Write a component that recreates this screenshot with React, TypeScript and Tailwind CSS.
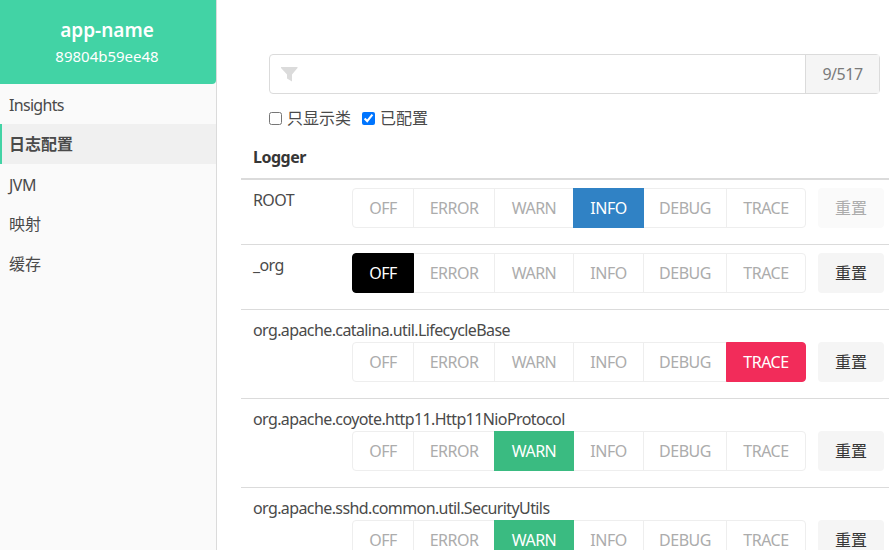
import React from "react";

const levels = ["OFF", "ERROR", "WARN", "INFO", "DEBUG", "TRACE"];
const widths = ["w-[62px]", "w-[82px]", "w-[80px]", "w-[71px]", "w-[84px]", "w-[80px]"];
const activeCls: Record<string, string> = {
  OFF: "bg-black text-white border-black",
  WARN: "bg-[#3abb81] text-white border-[#3abb81]",
  INFO: "bg-[#3082c5] text-white border-[#3082c5]",
  TRACE: "bg-[#f22c5a] text-white border-[#f22c5a]",
};

const rows = [
  { name: "ROOT", level: "INFO", disabled: true },
  { name: "_org", level: "OFF" },
  { name: "org.apache.catalina.util.LifecycleBase", level: "TRACE" },
  { name: "org.apache.coyote.http11.Http11NioProtocol", level: "WARN" },
  { name: "org.apache.sshd.common.util.SecurityUtils", level: "WARN" },
];

function Row({ name, level, disabled }: { name: string; level: string; disabled?: boolean }) {
  return (
    <div className="flex flex-wrap items-start justify-between border-b border-[#dbdbdb] pt-2 pb-4 pl-3 pr-[5px]">
      <div className="leading-6 tracking-[-0.6px]">{name}</div>
      <div className="ml-auto flex h-10 shrink-0">
        <div className="flex h-10">
          {levels.map((l, i) => {
            const on = l === level;
            return (
              <div
                key={l}
                className={`flex h-10 items-center justify-center border ${widths[i]} ${i > 0 ? "-ml-px" : ""} ${
                  i === 0 ? "rounded-l" : ""
                } ${i === 5 ? "rounded-r" : ""} ${on ? `${activeCls[l]} relative` : "border-[#eeeeee] text-[#acacac]"}`}
              >
                {l}
              </div>
            );
          })}
        </div>
        <div
          className={`ml-3 flex h-10 w-[66px] items-center justify-center rounded tracking-normal ${
            disabled ? "bg-[#fafafa] text-[#acacac]" : "bg-[#f5f5f5] text-[#363636]"
          }`}
        >
          重置
        </div>
      </div>
    </div>
  );
}

export default function App() {
  return (
    <div
      className="flex h-[550px] w-[889px] overflow-hidden bg-white text-[16px] tracking-[-0.5px] text-[#4a4a4a]"
      style={{ fontFamily: '"Noto Sans","Noto Sans CJK SC",sans-serif' }}
    >
      <aside className="h-full w-[217px] shrink-0 border-r border-[#dbdbdb] bg-[#fafafa]">
        <div className="flex h-[84px] flex-col items-center justify-center rounded-br-sm bg-[#42d3a5] pr-[2px] tracking-normal text-white">
          <div className="text-[19px] font-semibold leading-[28px]">app-name</div>
          <div className="text-[15px] leading-[24px]">89804b59ee48</div>
        </div>
        <nav>
          <div className="flex h-10 items-center pl-[9px] pt-px tracking-[-0.7px]">Insights</div>
          <div className="flex h-10 items-center border-l-2 border-[#42d3a5] bg-[#f0f0f0] pl-[7px] font-semibold tracking-normal">日志配置</div>
          <div className="flex h-10 items-center pl-[9px] pt-px">JVM</div>
          <div className="flex h-10 items-center pl-[9px] tracking-normal">映射</div>
          <div className="flex h-10 items-center pl-[9px] tracking-normal">缓存</div>
        </nav>
      </aside>
      <main className="min-w-0 flex-1 pl-6">
        <div className="ml-7 mr-[9px] mt-[54px] flex h-10 rounded border border-[#dbdbdb]">
          <div className="flex flex-1 items-center pl-[11px]">
            <svg width="17" height="15" viewBox="0 0 17 15" className="text-[#dbdbdb]" fill="currentColor">
              <path d="M0 0H16.500V1L11 7.500V14.500L6 11.500V7.500L0 1z" />
            </svg>
          </div>
          <div className="flex w-[74px] items-center justify-center border-l border-[#dbdbdb] bg-[#f5f5f5] text-[#7a7a7a]">9/517</div>
        </div>
        <div className="ml-7 mt-[14px] flex h-5 items-center tracking-normal">
          <label className="flex items-center">
            <input type="checkbox" readOnly className="m-0 h-[13px] w-[13px]" />
            <span className="ml-[5px]">只显示类</span>
          </label>
          <label className="ml-[11px] flex items-center">
            <input type="checkbox" readOnly checked className="m-0 h-[13px] w-[13px]" />
            <span className="ml-[5px]">已配置</span>
          </label>
        </div>
        <div className="mt-[8px] flex h-[44px] items-center border-b-2 border-[#dbdbdb] pl-3 font-bold text-[#363636]">Logger</div>
        {rows.map((r) => (
          <Row key={r.name} {...r} />
        ))}
      </main>
    </div>
  );
}
